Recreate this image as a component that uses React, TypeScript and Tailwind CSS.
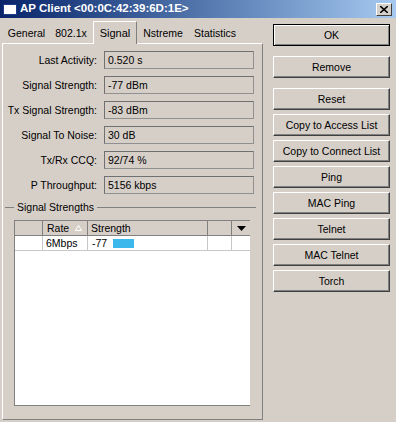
import React from "react";

const fields: [string, string][] = [
  ["Last Activity:", "0.520 s"],
  ["Signal Strength:", "-77 dBm"],
  ["Tx Signal Strength:", "-83 dBm"],
  ["Signal To Noise:", "30 dB"],
  ["Tx/Rx CCQ:", "92/74 %"],
  ["P Throughput:", "5156 kbps"],
];

const tabs = [
  { label: "General", w: "w-[45px]" },
  { label: "802.1x", w: "w-[44px]" },
  { label: "Signal", w: "w-[44px]", active: true },
  { label: "Nstreme", w: "w-[52px]" },
  { label: "Statistics", w: "w-[52px]" },
];

const buttons = [
  "Copy to Access List",
  "Copy to Connect List",
  "Ping",
  "MAC Ping",
  "Telnet",
  "MAC Telnet",
  "Torch",
];

function Btn({ label, def }: { label: string; def?: boolean }) {
  if (def) {
    return (
      <div className="h-[22px] w-[117px] border border-black flex items-center justify-center text-[10.5px] shadow-[inset_1px_1px_0_#ffffff,inset_-1px_-1px_0_#808080]">
        {label}
      </div>
    );
  }
  return (
    <div className="h-[22px] w-[117px] border border-t-white border-l-white border-r-[#404040] border-b-[#404040] flex items-center justify-center text-[10.5px] shadow-[inset_-1px_-1px_0_#808080]">
      {label}
    </div>
  );
}

export default function App() {
  return (
    <div className="w-[396px] h-[422px] bg-[#d6cfc8] overflow-hidden text-[10.5px] leading-none text-black font-['Liberation_Sans',Arial,sans-serif]">
      {/* title bar */}
      <div className="h-[18px] flex items-center bg-linear-to-r from-[#0a246a] to-[#a6caf0]">
        <div className="ml-[3px] w-[14px] h-[11px] bg-white border border-[#1c3a8a]" />
        <div className="ml-[3px] text-white font-bold text-[11.5px]">AP Client &lt;00:0C:42:39:6D:1E&gt;</div>
        <div className="ml-auto mr-[4px] w-[16px] h-[13px] bg-[#d4d0c8] border border-t-white border-l-white border-r-[#404040] border-b-[#404040] flex items-center justify-center">
          <svg width="8" height="7" viewBox="0 0 8 7">
            <path d="M0 0 L8 7 M8 0 L0 7" stroke="black" strokeWidth="1.6" />
          </svg>
        </div>
      </div>

      <div className="flex">
        {/* left column */}
        <div className="w-[263px]">
          <div className="h-[25px] flex items-end pl-[4px]">
            {tabs.map((t) =>
              t.active ? (
                <div
                  key={t.label}
                  className={`${t.w} h-[23px] relative z-10 -mb-[1px] bg-[#d6cfc8] border-t border-l border-white border-r border-r-[#808080] flex items-center justify-center text-[11px]`}
                >
                  {t.label}
                </div>
              ) : (
                <div
                  key={t.label}
                  className={`${t.w} h-[19px] flex items-center justify-center`}
                >
                  {t.label}
                </div>
              )
            )}
          </div>
          <div className="ml-[2px] w-[261px] h-[377px] border-t border-l border-white border-r border-b border-r-[#808080] border-b-[#808080]">
            <div className="pt-[7px] flex flex-col gap-[7px]">
              {fields.map(([l, v]) => (
                <div key={l} className="flex items-center h-[18px]">
                  <div className="w-[94px] text-right">{l}</div>
                  <div className="ml-[7px] w-[150px] h-[18px] border border-t-[#707070] border-l-[#707070] border-r-[#909090] border-b-[#909090] flex items-center pl-[3px]">
                    {v}
                  </div>
                </div>
              ))}
            </div>
            {/* group header */}
            <div className="mt-[7px] h-[12px] flex items-center">
              <div className="ml-[2px] w-[9px] border-t border-[#808080]" />
              <div className="px-[3px]">Signal Strengths</div>
              <div className="flex-1 mr-[6px] border-t border-[#808080]" />
            </div>
            {/* table */}
            <div className="mt-[7px] ml-[11px] w-[236px] h-[186px] bg-white border-l border-b border-[#808080] flex flex-col">
              <div className="h-[16px] flex bg-[#d6cfc8] border-b border-t border-[#808080]">
                <div className="w-[28px] border-r border-[#808080]" />
                <div className="w-[45px] border-r border-[#808080] flex items-center pl-[4px]">
                  <span>Rate</span>
                  <svg className="ml-[6px]" width="7" height="6" viewBox="0 0 7 6">
                    <path d="M3.5 0.5 L6.5 5.5 L0.5 5.5 Z" fill="none" stroke="#ffffff" strokeWidth="1" />
                  </svg>
                </div>
                <div className="w-[120px] border-r border-[#808080] flex items-center pl-[3px]">Strength</div>
                <div className="w-[24px] border-r border-[#808080]" />
                <div className="flex-1 flex items-center justify-center">
                  <svg width="9" height="5" viewBox="0 0 9 5">
                    <path d="M0 0 L9 0 L4.5 5 Z" fill="black" />
                  </svg>
                </div>
              </div>
              <div className="h-[15px] flex border-b border-[#c8c8c8]">
                <div className="w-[28px] border-r border-[#c8c8c8]" />
                <div className="w-[45px] border-r border-[#c8c8c8] flex items-center pl-[3px]">6Mbps</div>
                <div className="w-[120px] border-r border-[#c8c8c8] flex items-center pl-[4px]">
                  <span>-77</span>
                  <div className="ml-[6px] w-[21px] h-[9px] bg-[#3cb8ec]" />
                </div>
                <div className="w-[24px] border-r border-[#c8c8c8]" />
                <div className="flex-1" />
              </div>
            </div>
          </div>
        </div>

        {/* right column */}
        <div className="ml-[10px] pt-[6px] flex flex-col">
          <Btn label="OK" def />
          <div className="mt-[10px]">
            <Btn label="Remove" />
          </div>
          <div className="mt-[10px] flex flex-col gap-[4px]">
            <Btn label="Reset" />
            {buttons.map((b) => (
              <Btn key={b} label={b} />
            ))}
          </div>
        </div>
      </div>
    </div>
  );
}
